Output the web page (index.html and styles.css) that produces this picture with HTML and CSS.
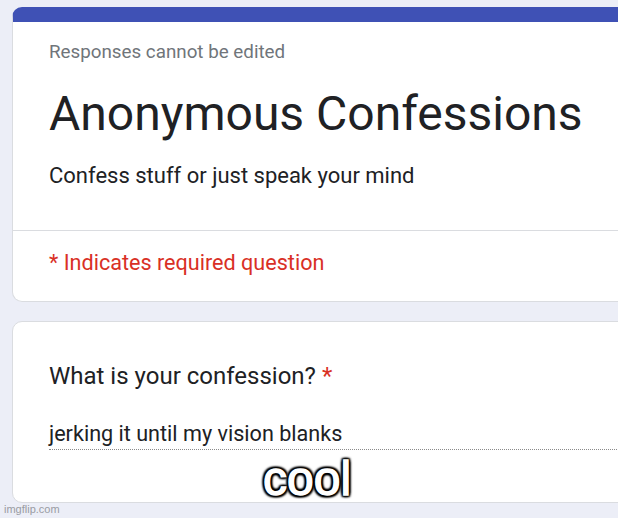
FILE: index.html
```html
<!DOCTYPE html>
<html lang="en">
<head>
<meta charset="utf-8">
<title>Anonymous Confessions</title>
<link rel="stylesheet" href="styles.css">
</head>
<body>
<main class="page">
  <section class="card card-head">
    <div class="head-main">
      <p class="note">Responses cannot be edited</p>
      <h1 class="title">Anonymous Confessions</h1>
      <p class="desc">Confess stuff or just speak your mind</p>
    </div>
    <div class="head-foot">
      <p class="required">* Indicates required question</p>
    </div>
  </section>
  <section class="card card-question">
    <p class="question">What is your confession? <span class="star">*</span></p>
    <div class="answer">jerking it until my vision blanks</div>
  </section>
</main>
<div class="caption">cool</div>
<div class="watermark">imgflip.com</div>
</body>
</html>
```
FILE: styles.css
```css
html, body {
  margin: 0;
  padding: 0;
}
body {
  width: 618px;
  height: 518px;
  overflow: hidden;
  background: #eceef7;
  font-family: Roboto, "Liberation Sans", sans-serif;
  color: #202124;
  position: relative;
}
.page {
  padding: 7px 0 0 12px;
  display: flex;
  flex-direction: column;
  gap: 19px;
}
.card {
  width: 650px;
  box-sizing: border-box;
  background: #fff;
  border: 1px solid #dadce0;
  border-radius: 10px;
}
.card-head {
  border-top: 15px solid #3f51b5;
}
p, h1 {
  margin: 0;
}
.head-main {
  padding: 18px 0 39px 36px;
  border-bottom: 1px solid #dadce0;
}
.note {
  font-size: 18.8px;
  line-height: 24px;
  color: #70757a;
}
.title {
  font-size: 48px;
  line-height: 60px;
  font-weight: 400;
  margin-top: 20px;
}
.desc {
  font-size: 22px;
  line-height: 30px;
  margin-top: 17px;
}
.head-foot {
  padding: 17px 0 23px 36px;
}
.required {
  font-size: 21.6px;
  line-height: 30px;
  color: #d93025;
}
.card-question {
  padding: 38px 0 52px 36px;
}
.question {
  font-size: 24px;
  line-height: 32px;
}
.star {
  color: #d93025;
}
.answer {
  margin-top: 27px;
  font-size: 21.6px;
  line-height: 30px;
  border-bottom: 1px dotted #8a8a8a;
}
.caption {
  position: absolute;
  left: 263px;
  top: 452px;
  font-family: "Liberation Sans", Arial, sans-serif;
  font-size: 48px;
  line-height: 54px;
  color: #fff;
  -webkit-text-stroke: 1.4px #fff;
  text-shadow:
    2px 2px 2px #000, -2px -2px 2px #000, 2px -2px 2px #000, -2px 2px 2px #000,
    0 2px 2px #000, 0 -2px 2px #000, 2px 0 2px #000, -2px 0 2px #000,
    0 0 4px #000;
}
.watermark {
  position: absolute;
  left: 4px;
  top: 502px;
  font-family: "Liberation Sans", Arial, sans-serif;
  font-size: 11px;
  line-height: 14px;
  color: #9a9ca3;
}
```
